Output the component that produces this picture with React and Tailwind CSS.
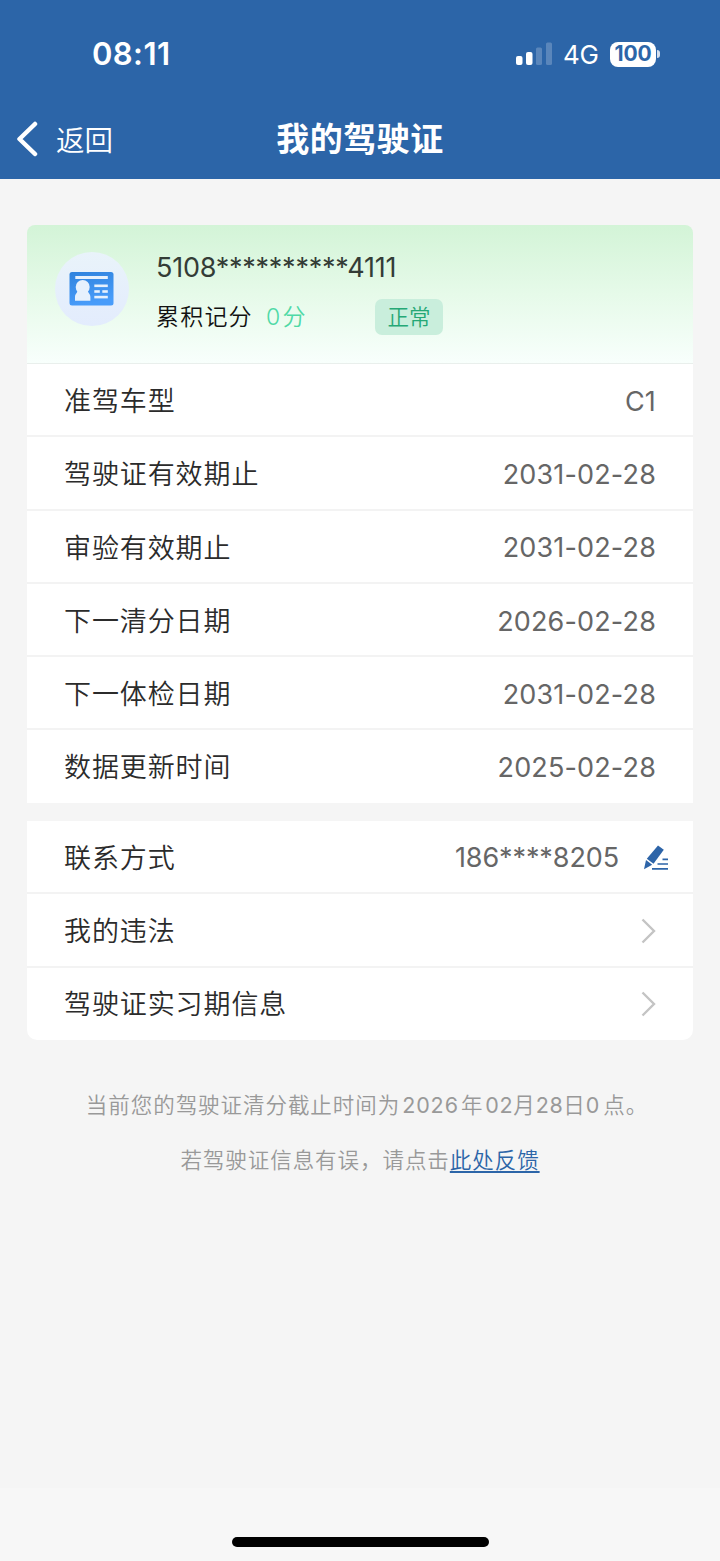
const licenseRows = [
  { label: '准驾车型', value: 'C1' },
  { label: '驾驶证有效期止', value: '2031-02-28' },
  { label: '审验有效期止', value: '2031-02-28' },
  { label: '下一清分日期', value: '2026-02-28' },
  { label: '下一体检日期', value: '2031-02-28' },
  { label: '数据更新时间', value: '2025-02-28' },
];

const linkRows = ['我的违法', '驾驶证实习期信息'];

function StatusBar() {
  return (
    <div className="flex h-[98px] items-start justify-between pt-[35px] pr-[60px] pl-[92px] text-white">
      <span className="text-[31px] leading-[38px] font-semibold tracking-[0.4px]">08:11</span>
      <div className="flex h-[38px] items-center">
        <svg className="h-6 w-9" viewBox="0 0 36 24" fill="currentColor">
          <rect x="0" y="14" width="6.5" height="9" rx="2" />
          <rect x="10" y="10" width="6.5" height="13" rx="2" />
          <rect x="20" y="5.5" width="6" height="17.5" rx="1.5" opacity="0.22" />
          <rect x="30" y="0.5" width="6" height="22.5" rx="1.5" opacity="0.22" />
        </svg>
        <span className="ml-[11px] w-[36px] pt-px text-[26px] leading-[40px] tracking-[-0.2px]">4G</span>
        <span className="ml-[11px] flex h-[25px] w-[46px] items-center justify-center rounded-[8px] bg-white text-[21px] font-bold tracking-[-0.1px] text-[#2c65a8]">100</span>
        <span className="ml-[1px] h-[8px] w-[3px] rounded-r-full bg-white/80" />
      </div>
    </div>
  );
}

function NavBar() {
  return (
    <div className="grid h-[81px] grid-cols-[1fr_auto_1fr] items-center text-white">
      <button className="flex items-center pl-4">
        <svg className="h-9 w-[22px]" viewBox="0 0 22 36" fill="none" stroke="currentColor" strokeWidth="4.5" strokeLinecap="round" strokeLinejoin="round">
          <path d="M19 3 3.5 18 19 33" />
        </svg>
        <span className="ml-[18px] pt-[4px] text-[28.5px] leading-[40px] font-[350]">返回</span>
      </button>
      <h1 className="text-[33px] leading-[44px] font-semibold tracking-[0.5px]">我的驾驶证</h1>
      <span />
    </div>
  );
}

function LicenseIcon() {
  return (
    <svg className="h-[74px] w-[74px]" viewBox="0 0 74 74">
      <defs>
        <linearGradient id="disc" x1="0" y1="0" x2="0" y2="1">
          <stop offset="0" stopColor="#e9f3fa" />
          <stop offset="1" stopColor="#e3ecfd" />
        </linearGradient>
        <linearGradient id="card" x1="0" y1="0" x2="0.3" y2="1">
          <stop offset="0" stopColor="#2f83dd" />
          <stop offset="1" stopColor="#489cfa" />
        </linearGradient>
      </defs>
      <circle cx="37" cy="37" r="37" fill="url(#disc)" />
      <rect x="14.5" y="20" width="44" height="33.5" rx="2.5" fill="url(#card)" />
      <g fill="#e6f1fd">
        <rect x="20.3" y="24" width="32.5" height="3" />
        <circle cx="27.7" cy="35" r="7" />
        <path d="M22.500 38h10.400c-.5 3 2.500 3.500 2.500 7v3.800H20V45c0-3.500 3-4 2.500-7z" />
        <rect x="39.300" y="32.500" width="13.500" height="2.600" />
        <rect x="39.300" y="38.200" width="5.500" height="2.600" />
        <rect x="47.300" y="38.200" width="5.500" height="2.600" />
        <rect x="39.300" y="43.800" width="13.500" height="2.600" />
      </g>
    </svg>
  );
}

function PenIcon() {
  return (
    <svg className="h-[26px] w-[26px]" viewBox="0 0 26 26" fill="#2d64a8">
      <path d="M15 .5 20.800 4.800 10.500 18.800 3.800 13.800z" />
      <path d="M3 15 9.200 19.700 1 24.200z" />
      <g stroke="#2d64a8" strokeWidth="1.700">
        <path d="M19.500 14.400h5.500M14.500 19h10.500M9 23.800h16" />
      </g>
    </svg>
  );
}

function Row({ label, children }) {
  return (
    <div className="flex h-[73.3px] items-center justify-between border-b-2 border-[#f3f3f3] px-[37px] pt-[3px] last:h-[72.5px] last:border-transparent">
      <span className="pt-[2px] text-[27px] leading-[38px] font-[350] tracking-[0.9px] text-[#2b2b2b]">{label}</span>
      {children}
    </div>
  );
}

export default function App() {
  return (
    <div className="flex h-[1561px] w-[720px] flex-col bg-[#f5f5f5] font-['Inter','Noto_Sans_CJK_SC',sans-serif]">
      <header className="bg-[#2c65a8]">
        <StatusBar />
        <NavBar />
      </header>

      <main className="flex flex-1 flex-col px-[27px] pt-[46px]">
        <section className="flex h-[138px] rounded-t-[8px] bg-linear-to-b from-[#d3f4d7] via-[#e6fae9] to-[#f8fffc] pt-[27px] pl-[28px]">
          <LicenseIcon />
          <div className="ml-[27px]">
            <p className="pt-px text-[27px] leading-[30px] tracking-[-0.25px] text-[#333c36]">5108**********4111</p>
            <div className="mt-[15px] flex h-[37px] items-center text-[23px] font-[350]">
              <span className="w-[110px] pt-[2px] tracking-[1.2px] text-[#111]">累积记分</span>
              <span className="w-[109px] pt-[2px] tracking-[2.2px] text-[#4fd9a6]">0分</span>
              <span className="flex h-[36px] w-[68px] items-center justify-center rounded-[7px] bg-[#c9eedc] pt-px text-[21.5px] text-[#25a876]">正常</span>
            </div>
          </div>
        </section>

        <section className="border-t border-[#e9efec] bg-white">
          {licenseRows.map((row) => (
            <Row key={row.label} label={row.label}>
              <span className="pt-px text-[27px] leading-[38px] tracking-[0.15px] text-[#666]">{row.value}</span>
            </Row>
          ))}
        </section>

        <section className="mt-[18px] rounded-b-[10px] bg-white">
          <Row label="联系方式">
            <div className="-mr-[13px] flex items-center">
              <span className="mr-[24px] text-[27px] leading-[38px] tracking-[-0.1px] text-[#666]">186****8205</span>
              <PenIcon />
            </div>
          </Row>
          {linkRows.map((label) => (
            <Row key={label} label={label}>
              <svg className="h-[26px] w-[15px]" viewBox="0 0 15 26" fill="none" stroke="#c4c4c4" strokeWidth="2.400">
                <path d="M1.500 1.500 13 13 1.500 24.500" />
              </svg>
            </Row>
          ))}
        </section>

        <div className="mt-[38px] text-center text-[21.500px] leading-[55px] font-[350] tracking-[0.950px] whitespace-nowrap text-[#999]">
          <p className="pl-[14px]">
            当前您的驾驶证清分截止时间为
            <span className="ml-[2px] font-normal tracking-[0.900px]">2026</span>
            <span className="mx-[2px]">年</span>
            <span className="font-normal tracking-[0.600px]">02</span>月<span className="font-normal tracking-[0.600px]">28</span>日
            <span className="mr-[3px] font-normal">0</span>点。
          </p>
          <p>
            若驾驶证信息有误，请点击<a className="text-[#2c65a8] underline decoration-2 underline-offset-[3px]">此处反馈</a>
          </p>
        </div>
      </main>

      <footer className="flex h-[73px] items-end justify-center bg-[#f7f7f7] pb-[14px]">
        <div className="h-[10px] w-[257px] rounded-full bg-black" />
      </footer>
    </div>
  );
}
